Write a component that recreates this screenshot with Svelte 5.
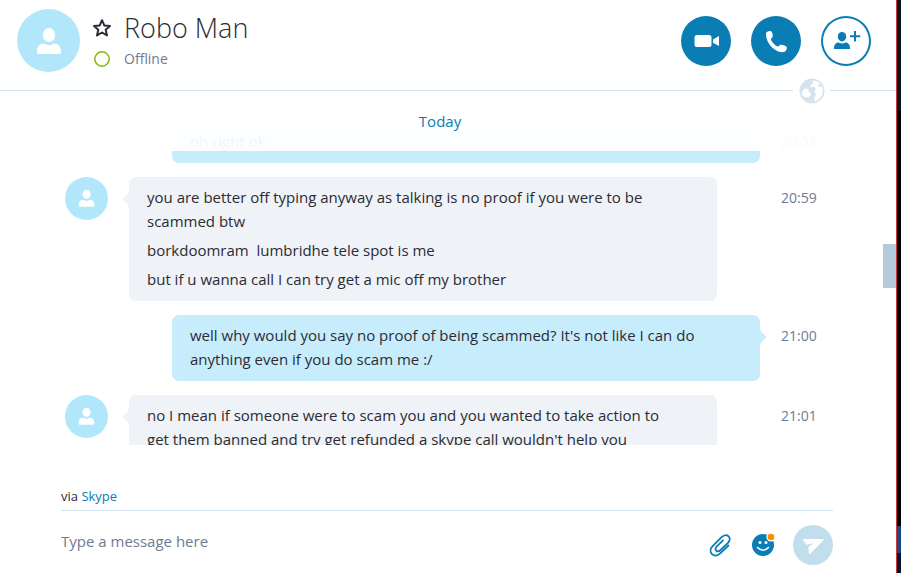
<script>
	const contact = { name: 'Robo Man', status: 'Offline' };

	const messages = [
		{ mine: true, time: '20:58', lines: ['oh right ok'] },
		{
			mine: false,
			time: '20:59',
			lines: [
				'you are better off typing anyway as talking is no proof if you were to be scammed btw',
				'borkdoomram  lumbridhe tele spot is me',
				'but if u wanna call I can try get a mic off my brother'
			]
		},
		{
			mine: true,
			time: '21:00',
			lines: [
				"well why would you say no proof of being scammed? It's not like I can do anything even if you do scam me :/"
			]
		},
		{
			mine: false,
			time: '21:01',
			lines: [
				"no I mean if someone were to scam you and you wanted to take action to get them banned and try get refunded a skype call wouldn't help you"
			]
		}
	];

	// position of the scroll thumb, as shares of the pane
	const thumb = { top: 43.3, height: 12.4 };

	let favourite = $state(false);
	let draft = $state('');
</script>

{#snippet person()}
	<svg viewBox="0 0 26 28" aria-hidden="true">
		<ellipse cx="13" cy="8" rx="6.2" ry="7" fill="#fff" />
		<path d="M1 27V24C1 19.5 4 16.5 8 16.5Q13 19.5 18 16.5C22 16.5 25 19.5 25 24V25.5Q25 27 23.5 27H2.5Q1 27 1 25.5Z" fill="#fff" />
	</svg>
{/snippet}

<div class="desktop">
	<main class="chat">
		<header>
			<div class="avatar large">{@render person()}</div>
			<div class="contact">
				<button class="star" class:favourite aria-label="Favourite" onclick={() => (favourite = !favourite)}>
					<svg viewBox="0 0 20 20" width="20" height="20">
						<path d="M10 2.2L12.3 7.4L18 8L13.7 11.8L15 17.4L10 14.5L5 17.4L6.3 11.8L2 8L7.7 7.4Z" fill="none" stroke="#2b2c33" stroke-width="2" stroke-linejoin="round" />
					</svg>
				</button>
				<h1>{contact.name}</h1>
				<svg class="presence" viewBox="0 0 16 16" width="16" height="16" aria-hidden="true">
					<circle cx="8" cy="8" r="7.2" fill="none" stroke="#7fba00" stroke-width="1.5" />
				</svg>
				<span class="status">{contact.status}</span>
			</div>
			<div class="calls">
				<button class="call" aria-label="Video call">
					<svg viewBox="0 0 50 50" width="50" height="50">
						<rect x="13.5" y="19" width="17" height="12" rx="2.5" fill="#fff" />
						<path d="M32 23.5L38 20V30L32 26.8Z" fill="#fff" />
					</svg>
				</button>
				<button class="call" aria-label="Call">
					<svg viewBox="0 0 50 50" width="50" height="50">
						<path d="M15 17.5C15 15.5 18.5 14.5 20 15.2C21.5 16 22.2 20 21.5 21.2C21 22.2 19.8 22.3 20 23.5C20.6 26 24 29.7 26.7 30.4C28 30.7 28.2 29.3 29.3 28.8C30.8 28.3 35 29.5 35.7 31C36.2 32.5 35 35.6 33 36C24.5 37.5 14.5 27 15 17.5Z" fill="#fff" />
					</svg>
				</button>
				<button class="call outline" aria-label="Add people">
					<svg viewBox="0 0 50 50" width="50" height="50">
						<ellipse cx="21" cy="20.7" rx="4.2" ry="4.8" fill="#0a7db5" />
						<path d="M13 33V31.5C13 28.5 15 26.5 17.5 26.5Q21 28.5 24.5 26.5C27 26.5 29 28.5 29 31.5V33Z" fill="#0a7db5" />
						<path d="M34 15V25.5M29 20.2H39.3" stroke="#0a7db5" stroke-width="2" />
					</svg>
				</button>
			</div>
			<span class="globe">
				<svg viewBox="0 0 26 26" width="26" height="26" aria-hidden="true">
					<circle cx="13" cy="13" r="12.5" fill="#d5e3ee" />
					<path d="M13.5 2.5C16.5 2.4 19.5 3.8 21.5 6L18.5 7L19.5 8.8L23 8.5C24.5 12 24 16.5 21.5 19.5C20 21.4 18 22.8 16 23.3L15 20.5L17 17L15.5 13.5L17 10L14 8.8L11.5 9.5L11 7.5L14 5.5Z" fill="#fff" />
					<path d="M6 10.5L9.5 11L10 14.5L12 15.5L11 18.5L8.5 19.5L4.5 19C3 17.5 3 14.5 3.5 13Z" fill="#fff" />
				</svg>
			</span>
		</header>

		<section class="history">
			<div class="day">Today</div>
			{#each messages as message}
				<article class="message" class:mine={message.mine}>
					{#if !message.mine}
						<div class="avatar">{@render person()}</div>
					{/if}
					<div class="bubble">
						<svg class="tail" viewBox="0 0 7 20" width="7" height="20" aria-hidden="true">
							<path d="M7 0C7 4 5 6 2 8.3Q0 10 2 11.7C5 14 7 16 7 20Z" fill="currentColor" />
						</svg>
						{#each message.lines as line}
							<p>{line}</p>
						{/each}
					</div>
					<time>{message.time}</time>
				</article>
			{/each}
			<div class="thumb" style="top: {thumb.top}%; height: {thumb.height}%"></div>
		</section>

		<footer>
			<div class="via">via <a href="#skype">Skype</a></div>
			<form class="composer" onsubmit={(e) => e.preventDefault()}>
				<input bind:value={draft} type="text" placeholder="Type a message here" aria-label="Message" />
				<button class="tool" type="button" aria-label="Attach a file">
					<svg viewBox="0 0 24 24" width="24" height="24">
						<path d="M19.5 12.5L11.5 20.2C8.8 22.8 5.2 23.4 3 21.2C0.8 19 1.2 15.8 3.4 13.4L12.6 4.2C14.8 2 17.8 1.6 19.6 3.3C21.4 5 21 7.8 19 9.8L11.6 17C10.2 18.4 8.3 18.6 7.2 17.5C6.1 16.4 6.4 14.7 7.8 13.4L14 7.4" fill="none" stroke="#0a7db5" stroke-width="1.8" stroke-linecap="round" />
					</svg>
				</button>
				<button class="tool" type="button" aria-label="Emoticons">
					<svg viewBox="0 0 24 24" width="24" height="24">
						<circle cx="12" cy="12" r="11" fill="#0a7db5" />
						<circle cx="9" cy="9.5" r="1.5" fill="#fff" />
						<circle cx="15" cy="9.5" r="1.5" fill="#fff" />
						<path d="M6.5 14.5Q12 20 17.5 14.5" fill="none" stroke="#fff" stroke-width="1.6" stroke-linecap="round" />
						<circle cx="20" cy="4" r="4.6" fill="#fff" />
						<circle cx="20" cy="4" r="3.3" fill="#ff8c00" />
					</svg>
				</button>
				<button class="send" aria-label="Send">
					<svg viewBox="0 0 40 40" width="40" height="40">
						<path d="M10.5 14H30Q31.5 14 30.5 15.2L17.5 28.6Q16 29.5 15.8 28L15.3 22L20.5 18.3L13.5 19.8L10 15.2Q9.7 14 10.5 14Z" fill="#fff" />
					</svg>
				</button>
			</form>
		</footer>
	</main>
	<div class="wallpaper"></div>
</div>

<style>
	:global(body) {
		margin: 0;
	}

	.desktop {
		display: flex;
		height: 100vh;
		overflow: hidden;
		font-family: 'Segoe UI', 'Open Sans', 'Noto Sans', sans-serif;
		font-size: 15px;
		line-height: 24px;
		color: #2b2c33;
		background: #fff;
	}

	.chat {
		display: flex;
		flex: 1;
		flex-direction: column;
		min-width: 0;
		border-right: 1px solid #c8383a;
	}

	.wallpaper {
		width: 4px;
		background: linear-gradient(#0a1524 0 111px, #000 111px calc(100% - 47px), #174a85 calc(100% - 47px) calc(100% - 20px), #08152b calc(100% - 20px));
	}

	button {
		display: block;
		padding: 0;
		border: 0;
		background: none;
		cursor: pointer;
	}

	svg {
		display: block;
	}

	header {
		position: relative;
		display: flex;
		align-items: center;
		padding: 9px 25px 18px 17px;
		border-bottom: 1px solid #d5e3ee;
	}

	.avatar {
		display: flex;
		align-items: center;
		justify-content: center;
		width: 43px;
		height: 43px;
		border-radius: 50%;
		background: #b2e7fb;
	}

	.avatar svg {
		width: 17px;
	}

	.avatar.large {
		width: 63px;
		height: 63px;
	}

	.avatar.large svg {
		width: 26px;
	}

	.contact {
		display: grid;
		flex: 1;
		grid-template-columns: 20px 1fr;
		column-gap: 12px;
		align-items: center;
		justify-items: start;
		margin-left: 12px;
		padding-bottom: 1px;
	}

	.star.favourite path {
		fill: #2b2c33;
	}

	h1 {
		margin: 0;
		font-size: 27px;
		font-weight: 300;
		line-height: 38px;
	}

	.presence {
		justify-self: center;
	}

	.status,
	time {
		font-size: 14px;
		color: #6e7a94;
	}

	.calls {
		display: flex;
		gap: 20px;
	}

	.call {
		border-radius: 50%;
		background: #0a7db5;
	}

	.call.outline {
		background: none;
		box-shadow: inset 0 0 0 2px #0a7db5;
	}

	.globe {
		position: absolute;
		right: 66px;
		bottom: -14px;
		z-index: 2;
		padding: 0 5px 0 6px;
		background: #fff;
	}

	.history {
		position: relative;
		flex: 1;
		min-height: 0;
		padding: 30px 79px 0 65px;
		overflow: hidden;
	}

	.day {
		position: absolute;
		top: 0;
		right: 16px;
		left: 0;
		z-index: 1;
		box-sizing: border-box;
		height: 60px;
		padding-top: 18px;
		color: #0a7db5;
		text-align: center;
		background: rgba(255, 255, 255, 0.95);
	}

	.message {
		display: flex;
		align-items: flex-start;
		margin-bottom: 14px;
	}

	.bubble {
		position: relative;
		flex: 1;
		margin: 0 43px 0 21px;
		padding: 8px 48px 10px 18px;
		border-radius: 7px;
		color: #2b2c33;
		background: #eff2f7;
	}

	.mine .bubble {
		margin: 0 0 0 107px;
		background: #c7ecfc;
	}

	.tail {
		position: absolute;
		top: 12px;
		right: 100%;
		color: #eff2f7;
	}

	.mine .tail {
		right: auto;
		left: 100%;
		color: #c7ecfc;
		transform: scaleX(-1);
	}

	p {
		margin: 0;
		white-space: pre-wrap;
	}

	p + p {
		margin-top: 5px;
	}

	time {
		width: 36px;
		padding: 9px 0 0 21px;
	}

	.thumb {
		position: absolute;
		right: 0;
		width: 13px;
		background: #b5cbdc;
	}

	footer {
		padding: 39px 63px 8px 61px;
	}

	.via {
		padding-bottom: 2px;
		border-bottom: 1px solid #d5e3ee;
		font-size: 13px;
	}

	.via a {
		color: #0a7db5;
		text-decoration: none;
	}

	.composer {
		display: flex;
		gap: 18px;
		align-items: center;
		padding-top: 14px;
	}

	input {
		flex: 1;
		min-width: 0;
		padding: 0 0 8px;
		border: 0;
		outline: 0;
		font: inherit;
		color: inherit;
		background: none;
	}

	input::placeholder {
		color: #6e7a94;
		opacity: 1;
	}

	.send {
		border-radius: 50%;
		background: #c0deeb;
	}
</style>
